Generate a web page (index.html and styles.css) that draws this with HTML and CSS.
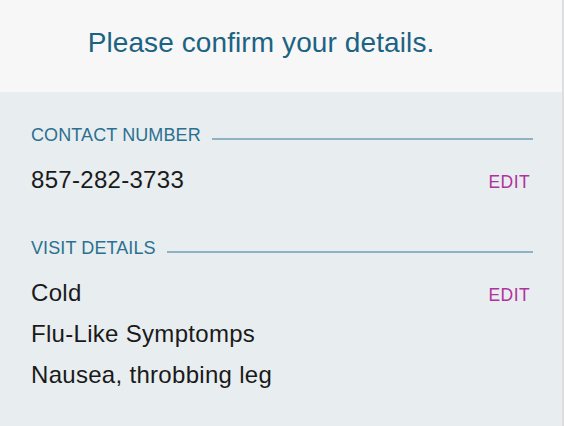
FILE: index.html
```html
<!DOCTYPE html>
<html>
<head>
<meta charset="utf-8">
<link rel="stylesheet" href="styles.css">
</head>
<body>
<div class="screen">
  <header class="header">
    <h1 class="title">Please confirm your details.</h1>
  </header>
  <main class="content">
    <section class="section">
      <div class="section-head">
        <span class="label">CONTACT NUMBER</span>
        <span class="rule"></span>
      </div>
      <div class="row">
        <div class="values">
          <div class="value">857-282-3733</div>
        </div>
        <a class="edit">EDIT</a>
      </div>
    </section>
    <section class="section">
      <div class="section-head">
        <span class="label">VISIT DETAILS</span>
        <span class="rule"></span>
      </div>
      <div class="row">
        <div class="values">
          <div class="value">Cold</div>
          <div class="value">Flu-Like Symptomps</div>
          <div class="value">Nausea, throbbing leg</div>
        </div>
        <a class="edit">EDIT</a>
      </div>
    </section>
  </main>
</div>
</body>
</html>
```
FILE: styles.css
```css
* { box-sizing: border-box; }
html, body { margin: 0; padding: 0; }
body {
  width: 564px;
  height: 426px;
  overflow: hidden;
  font-family: "Liberation Sans", Arial, sans-serif;
  background: #e8edf0;
}
.screen {
  display: flex;
  flex-direction: column;
  height: 426px;
  border-right: 2px solid #dcdee0;
}
.header {
  height: 92px;
  flex: none;
  background: #f7f7f7;
  padding: 26px 40px 0 0;
  text-align: center;
}
.title {
  margin: 0;
  font-weight: 400;
  font-size: 28px;
  line-height: 34px;
  color: #1c6383;
  letter-spacing: 0.1px;
}
.content {
  flex: 1;
  background: #e8edf0;
  padding: 33px 29px 0 31px;
}
.section + .section { margin-top: 38px; }
.section-head {
  display: flex;
  gap: 11px;
  height: 20px;
}
.label {
  font-size: 18px;
  line-height: 20px;
  color: #2b7090;
  letter-spacing: 0.1px;
}
.rule {
  flex: 1;
  align-self: flex-end;
  height: 2px;
  margin-bottom: 5px;
  background: #8eb2c2;
}
.row {
  display: flex;
  justify-content: space-between;
  align-items: baseline;
  margin-top: 14px;
}
.value {
  font-size: 24px;
  color: #1a1a1a;
  line-height: 41px;
  letter-spacing: 0.3px;
}
.edit {
  font-size: 17.5px;
  line-height: 18px;
  color: #b1329c;
  letter-spacing: 0.4px;
  margin-right: 3px;
  cursor: pointer;
}
```
